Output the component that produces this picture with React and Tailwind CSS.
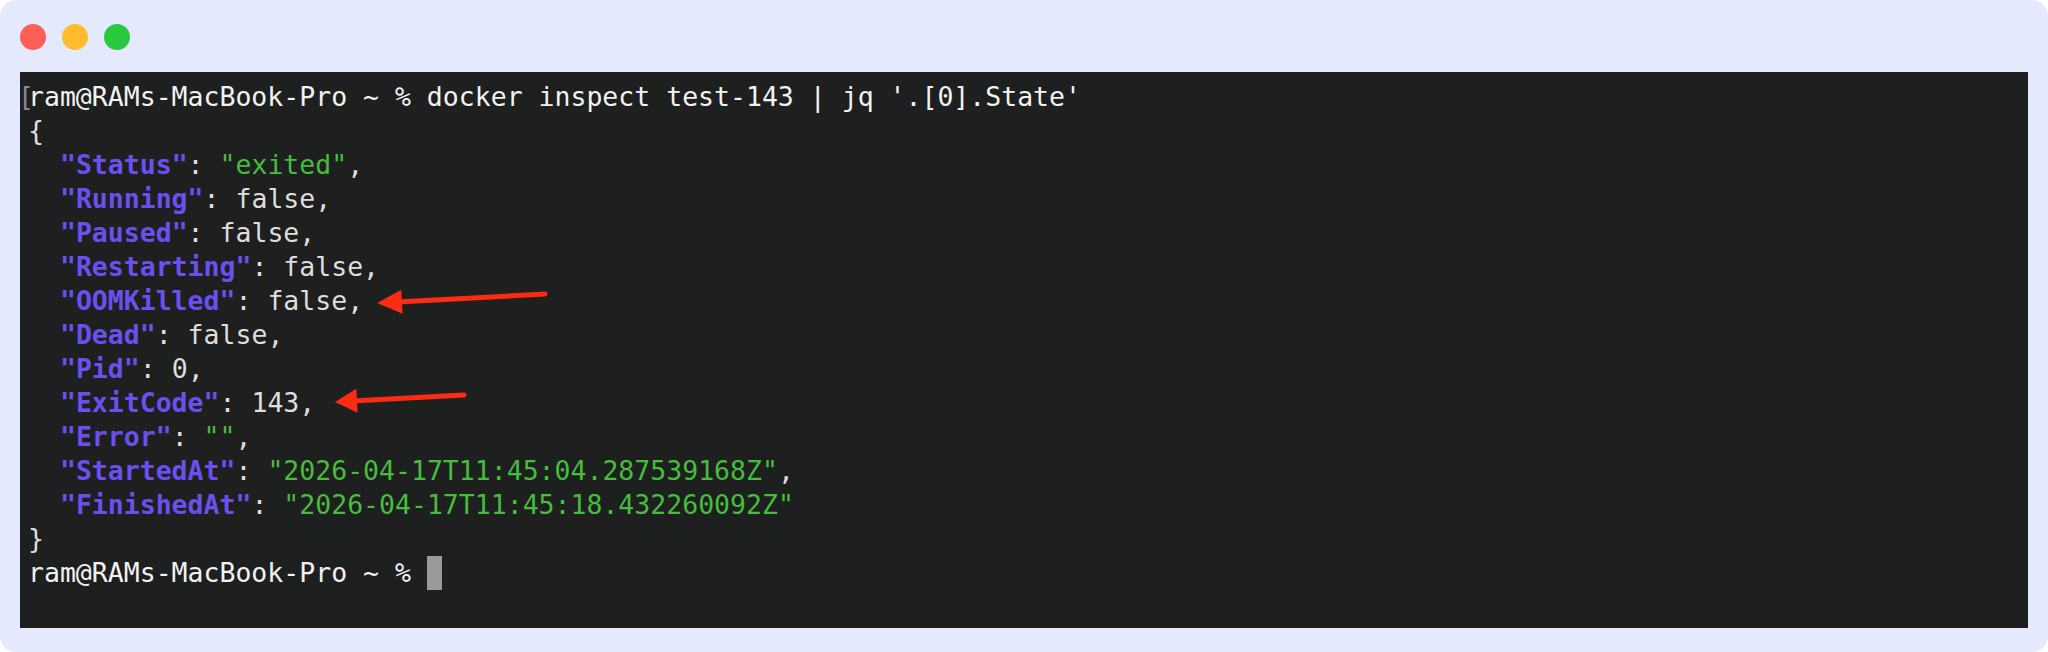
import React from 'react';

const key = 'text-[#6b50f0] font-bold';
const str = 'text-[#46bd3c]';
const val = 'text-[#dedede]';

// one row of the jq output: key, then value with its colour
const Row = ({ k, v, cls, comma = true }) => (
  <div>
    {'  '}
    <span className={key}>"{k}"</span>
    <span className={val}>: </span>
    <span className={cls}>{v}</span>
    {comma && <span className={val}>,</span>}
  </div>
);

const App = () => {
  return (
    <div className="w-[2048px] h-[652px] bg-white">
      <div className="h-full rounded-2xl bg-[#e5e9fd] px-5 pt-6 pb-6 flex flex-col">
        {/* window buttons */}
        <div className="flex gap-4">
          <div className="w-[26px] h-[26px] rounded-full bg-[#fe5f57]" />
          <div className="w-[26px] h-[26px] rounded-full bg-[#febc2e]" />
          <div className="w-[26px] h-[26px] rounded-full bg-[#28c840]" />
        </div>

        {/* terminal */}
        <div className="relative mt-[22px] flex-1 bg-[#1e1f1f] pl-2 pt-2 font-['DejaVu_Sans_Mono',monospace] text-[26.5px] leading-[34px] whitespace-pre text-[#f2f2f2]">
          <div className="relative">
            <span className="absolute left-[-10px] top-0 inline-block w-[10px] text-[#8a8a8a] font-light">[</span>
            ram@RAMs-MacBook-Pro ~ % docker inspect test-143 | jq '.[0].State'
          </div>
          <div className={val}>{'{'}</div>
          <Row k="Status" v={'"exited"'} cls={str} />
          <Row k="Running" v="false" cls={val} />
          <Row k="Paused" v="false" cls={val} />
          <Row k="Restarting" v="false" cls={val} />
          <Row k="OOMKilled" v="false" cls={val} />
          <Row k="Dead" v="false" cls={val} />
          <Row k="Pid" v="0" cls={val} />
          <Row k="ExitCode" v="143" cls={val} />
          <Row k="Error" v={'""'} cls={str} />
          <Row k="StartedAt" v={'"2026-04-17T11:45:04.287539168Z"'} cls={str} />
          <Row k="FinishedAt" v={'"2026-04-17T11:45:18.432260092Z"'} cls={str} comma={false} />
          <div className={val}>{'}'}</div>
          <div className="flex items-center">
            <span>ram@RAMs-MacBook-Pro ~ % </span>
            <span className="inline-block w-[15px] h-[34px] bg-[#9a9a9a]" />
          </div>

          {/* annotation arrows */}
          <svg className="absolute inset-0 pointer-events-none" width="2008" height="556">
            <line x1="525" y1="222" x2="382" y2="229.7" stroke="#fb2b14" strokeWidth="5" strokeLinecap="round" />
            <polygon points="357,231 382.6,241.7 381.3,217.7" fill="#fb2b14" />
            <line x1="444" y1="323" x2="337" y2="328.8" stroke="#fb2b14" strokeWidth="5" strokeLinecap="round" />
            <polygon points="315,330 337.6,340.8 336.4,316.8" fill="#fb2b14" />
          </svg>
        </div>
      </div>
    </div>
  );
};

export default App;
